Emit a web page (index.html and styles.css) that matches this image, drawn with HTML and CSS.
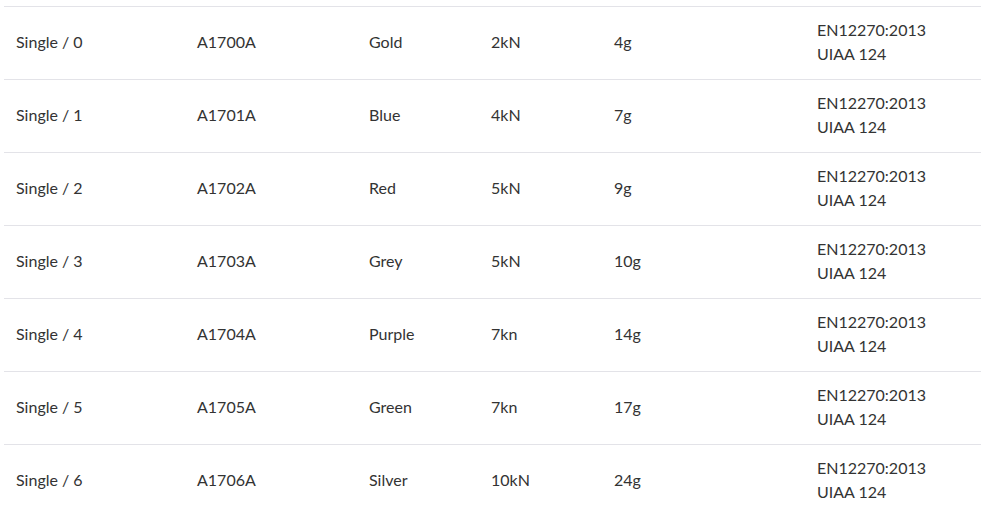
FILE: index.html
```html
<!DOCTYPE html>
<html>
<head>
<meta charset="utf-8">
<link rel="stylesheet" href="styles.css">
</head>
<body>
<table class="spec">
<colgroup>
<col class="c1"><col class="c2"><col class="c3"><col class="c4"><col class="c5"><col class="c6">
</colgroup>
<tbody>
<tr><td>Single / 0</td><td>A1700A</td><td>Gold</td><td>2kN</td><td>4g</td><td>EN12270:2013<br>UIAA 124</td></tr>
<tr><td>Single / 1</td><td>A1701A</td><td>Blue</td><td>4kN</td><td>7g</td><td>EN12270:2013<br>UIAA 124</td></tr>
<tr><td>Single / 2</td><td>A1702A</td><td>Red</td><td>5kN</td><td>9g</td><td>EN12270:2013<br>UIAA 124</td></tr>
<tr><td>Single / 3</td><td>A1703A</td><td>Grey</td><td>5kN</td><td>10g</td><td>EN12270:2013<br>UIAA 124</td></tr>
<tr><td>Single / 4</td><td>A1704A</td><td>Purple</td><td>7kn</td><td>14g</td><td>EN12270:2013<br>UIAA 124</td></tr>
<tr><td>Single / 5</td><td>A1705A</td><td>Green</td><td>7kn</td><td>17g</td><td>EN12270:2013<br>UIAA 124</td></tr>
<tr><td>Single / 6</td><td>A1706A</td><td>Silver</td><td>10kN</td><td>24g</td><td>EN12270:2013<br>UIAA 124</td></tr>
</tbody>
</table>
</body>
</html>
```
FILE: styles.css
```css
html, body {
  margin: 0;
  padding: 0;
  background: #ffffff;
}
body {
  padding: 6px 4px 0 4px;
  font-family: "Lato", "Liberation Sans", sans-serif;
  font-size: 16px;
  color: #333333;
}
.spec {
  width: 977px;
  border-collapse: collapse;
  table-layout: fixed;
}
.c1 { width: 181px; }
.c2 { width: 172px; }
.c3 { width: 122px; }
.c4 { width: 123px; }
.c5 { width: 203px; }
.c6 { width: 176px; }
.spec td {
  border-top: 1px solid #e3e3e8;
  padding: 11px 12px 13px 12px;
  line-height: 24px;
  height: 48px;
  vertical-align: middle;
  text-align: left;
}
```
